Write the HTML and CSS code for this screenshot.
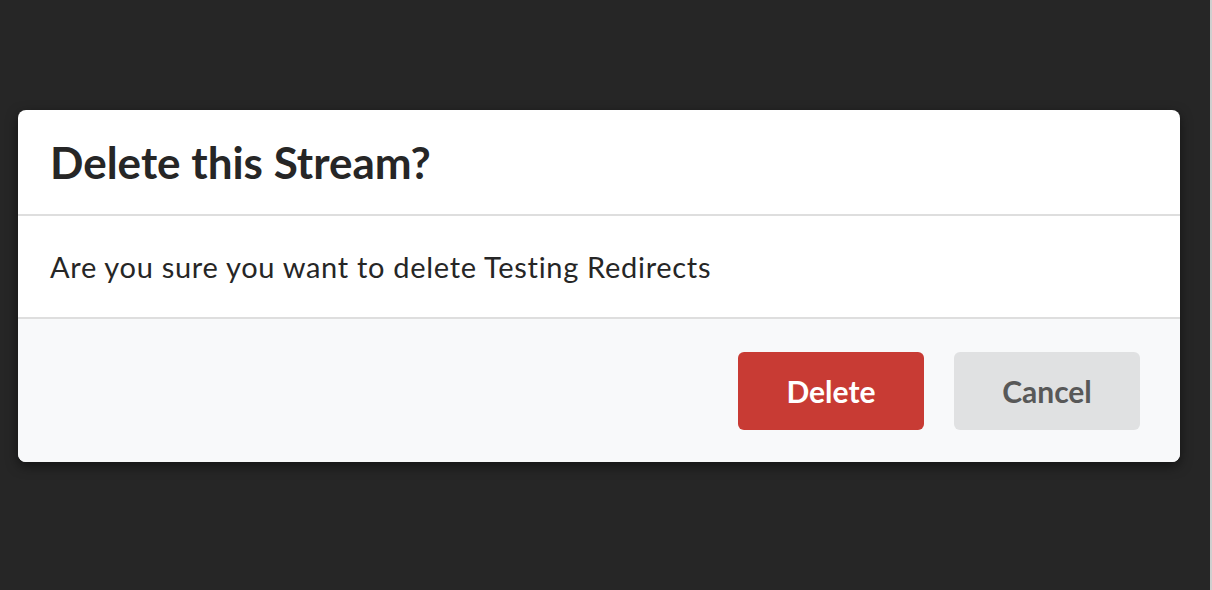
FILE: index.html
```html
<!DOCTYPE html>
<html lang="en">
<head>
<meta charset="utf-8">
<title>Delete this Stream?</title>
<link rel="stylesheet" href="styles.css">
</head>
<body>
<div class="page">
  <div class="backdrop">
    <div class="modal">
      <div class="modal-header">Delete this Stream?</div>
      <div class="modal-content">Are you sure you want to delete Testing Redirects</div>
      <div class="modal-actions">
        <button class="btn btn-red">Delete</button>
        <button class="btn btn-grey">Cancel</button>
      </div>
    </div>
  </div>
  <div class="edge"></div>
</div>
</body>
</html>
```
FILE: styles.css
```css
html, body {
  margin: 0;
  padding: 0;
  height: 100%;
  background: #262626;
  font-family: Lato, "Liberation Sans", sans-serif;
}
.page {
  display: flex;
  height: 590px;
}
.backdrop {
  flex: 1;
  padding: 110px 30px 0 18px;
}
.edge {
  width: 2px;
  background: #cfcfcf;
}
.modal {
  background: #fff;
  border-radius: 8px;
  box-shadow: 0 4px 12px rgba(0, 0, 0, 0.5);
  overflow: hidden;
}
.modal-header {
  height: 106px;
  box-sizing: border-box;
  display: flex;
  align-items: center;
  padding: 0 32px;
  font-size: 44px;
  font-weight: 700;
  color: #262626;
  border-bottom: 2px solid #dedede;
}
.modal-content {
  height: 103px;
  box-sizing: border-box;
  display: flex;
  align-items: center;
  padding: 0 32px;
  font-size: 29px;
  letter-spacing: 0.7px;
  color: #262626;
  border-bottom: 2px solid #dedede;
  font-feature-settings: "liga" 0;
}
.modal-actions {
  display: flex;
  justify-content: flex-end;
  gap: 30px;
  padding: 33px 40px 32px;
  background: #f8f9fa;
}
.btn {
  width: 186px;
  height: 78px;
  border: none;
  border-radius: 6px;
  font-family: Lato, "Liberation Sans", sans-serif;
  font-size: 30px;
  font-weight: 700;
  cursor: pointer;
}
.btn-red {
  background: #c83b34;
  color: #fff;
}
.btn-grey {
  background: #e0e1e2;
  color: #585858;
}
```
